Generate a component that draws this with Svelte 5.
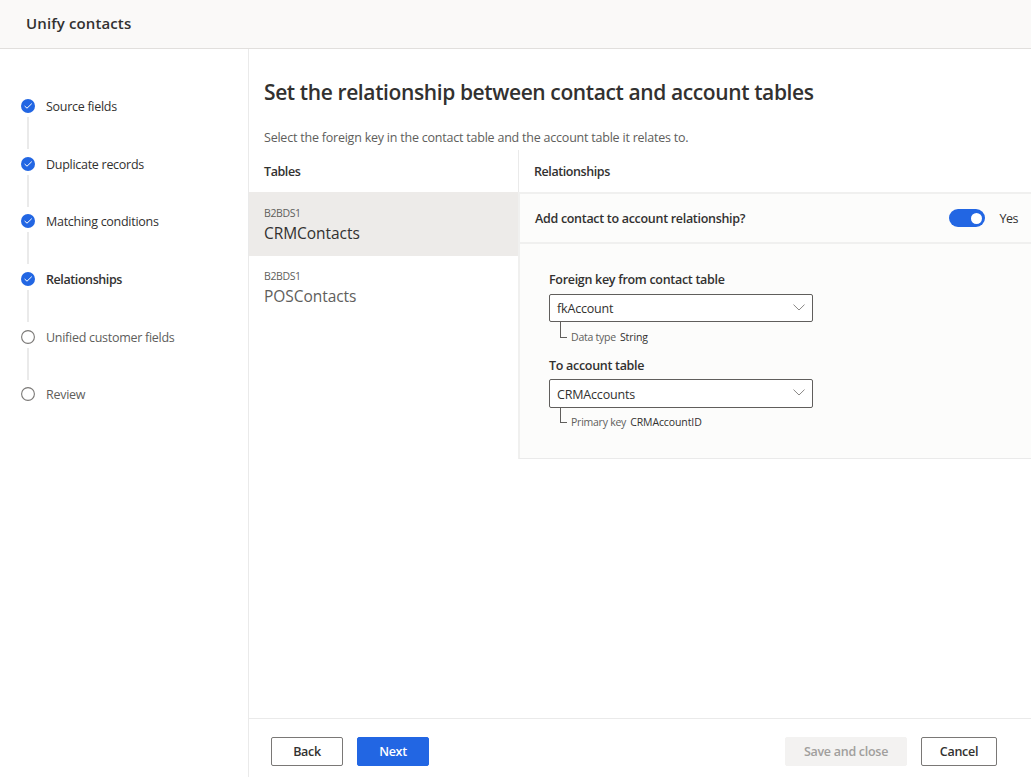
<script>
  const steps = [
    { label: 'Source fields', done: true },
    { label: 'Duplicate records', done: true },
    { label: 'Matching conditions', done: true },
    { label: 'Relationships', done: true, current: true },
    { label: 'Unified customer fields' },
    { label: 'Review' }
  ];
  const tables = [
    { source: 'B2BDS1', name: 'CRMContacts', selected: true },
    { source: 'B2BDS1', name: 'POSContacts' }
  ];
  const fields = [
    { label: 'Foreign key from contact table', value: 'fkAccount', hint: 'Data type', detail: 'String' },
    { label: 'To account table', value: 'CRMAccounts', hint: 'Primary key', detail: 'CRMAccountID' }
  ];
</script>

<div class="page">
  <header><h1>Unify contacts</h1></header>
  <div class="body">
    <nav>
      {#each steps as s, i}
        <div class="step" class:done={s.done} class:current={s.current}>
          <div class="rail">
            <svg class="dot" width="14" height="14" viewBox="0 0 14 14">
              {#if s.done}
                <circle cx="7" cy="7" r="7" fill="#2266e3" />
                <path d="M3.6 7 6 9.2 10.8 4.6" fill="none" stroke="#fff" stroke-width="1" />
              {:else}
                <circle cx="7" cy="7" r="6.4" fill="#fff" stroke="#7a7876" stroke-width="1.1" />
              {/if}
            </svg>
            {#if i < steps.length - 1}<div class="line"></div>{/if}
          </div>
          <span>{s.label}</span>
        </div>
      {/each}
    </nav>
    <main>
      <h2>Set the relationship between contact and account tables</h2>
      <div class="intro"><span>Select the foreign key in the contact table and the account table it relates to.</span></div>
      <div class="columns">
        <section class="tables">
          <div class="colhead"><span>Tables</span></div>
          {#each tables as t}
            <div class="table" class:selected={t.selected}>
              <div class="source"><span>{t.source}</span></div>
              <div class="name"><span>{t.name}</span></div>
            </div>
          {/each}
        </section>
        <section class="relations">
          <div class="colhead"><span>Relationships</span></div>
          <div class="ask">
            <span class="question">Add contact to account relationship?</span>
            <div class="toggle"><i></i></div>
            <span class="yes">Yes</span>
          </div>
          <div class="form">
            {#each fields as f}
              <div class="field">
                <div class="label"><span>{f.label}</span></div>
                <div class="select">
                  <span>{f.value}</span>
                  <svg width="12" height="7" viewBox="0 0 12 7"><path d="M.5.6 6 6 11.5.6" fill="none" stroke="#8a8886" /></svg>
                </div>
                <div class="detail"><div class="elbow"></div><span class="hint">{f.hint}</span><span>{f.detail}</span></div>
              </div>
            {/each}
          </div>
        </section>
      </div>
      <footer>
        <button class="back"><span>Back</span></button>
        <button class="next"><span>Next</span></button>
        <button class="save" disabled><span>Save and close</span></button>
        <button class="cancel"><span>Cancel</span></button>
      </footer>
    </main>
  </div>
</div>

<style>
  :global(body) { margin: 0; background: #fff; }
  * { box-sizing: border-box; }
  .page { width: 100%; height: 777px; display: flex; flex-direction: column; overflow: hidden; font-family: "Open Sans", "Noto Sans", sans-serif; font-size: 12.5px; letter-spacing: -0.22px; color: #323130; background: #fff; }
  span, h1, h2 { white-space: nowrap; }
  header { height: 49px; flex: none; background: #faf9f8; border-bottom: 1px solid #e1dfdd; padding: 11px 26px 0; }
  h1 { margin: 0; font-size: 15px; line-height: 24px; font-weight: 600; letter-spacing: 0.12px; }
  .body { flex: 1; display: flex; min-height: 0; }
  nav { width: 249px; flex: none; border-right: 1px solid #eaeaea; padding: 50px 0 0 21px; letter-spacing: -0.28px; }
  .step { display: flex; gap: 11px; height: 57.7px; color: #605e5c; }
  .step.done { color: #323130; }
  .step.current { font-weight: 600; letter-spacing: -0.41px; }
  .step span { line-height: 15px; }
  .rail { width: 14px; display: flex; flex-direction: column; align-items: center; }
  .dot { flex: none; display: block; }
  .line { width: 2px; height: 32px; margin-top: 4px; background: #eaeaea; }
  main { flex: 1; min-width: 0; display: flex; flex-direction: column; }
  h2 { margin: 28px 0 0 15px; font-size: 21px; line-height: 30px; font-weight: 600; letter-spacing: -0.39px; }
  .intro { margin: 21px 0 0 15px; line-height: 20px; height: 22px; color: #605e5c; }
  .columns { display: flex; height: 309px; flex: none; }
  .tables { width: 269px; flex: none; }
  .colhead { height: 42px; padding: 12px 15px 0; line-height: 20px; font-weight: 600; letter-spacing: -0.42px; }
  .relations .colhead { border-left: 1px solid #eaeaea; }
  .table { height: 63px; padding: 11px 15px 0; color: #605e5c; }
  .table.selected { height: 64px; background: #edebe9; padding-top: 12px; }
  .source { font-size: 10.5px; line-height: 18px; letter-spacing: -0.38px; }
  .name { font-size: 15.5px; line-height: 23px; letter-spacing: -0.05px; }
  .selected .name { color: #323130; }
  .relations { flex: 1; display: flex; flex-direction: column; }
  .ask { height: 52px; border: 2px solid #f0f0ef; border-right: 0; background: #fcfcfb; display: flex; align-items: center; padding: 0 12px 0 15px; }
  .question { font-weight: 600; letter-spacing: -0.3px; margin-right: auto; }
  .yes { letter-spacing: -0.5px; margin-right: 1px; }
  .toggle { width: 36px; height: 18px; border-radius: 9px; background: #2266e3; display: flex; justify-content: flex-end; align-items: center; padding-right: 3px; margin-right: 15px; }
  .toggle i { width: 11px; height: 11px; border-radius: 50%; background: #fff; }
  .form { flex: 1; background: #fcfcfb; border-bottom: 1px solid #eaeaea; border-left: 2px solid #f0f0ef; padding: 25px 0 0 29px; }
  .field { height: 85px; }
  .label { font-weight: 600; line-height: 22px; height: 25px; letter-spacing: -0.3px; }
  .select { width: 264px; height: 28px; border: 1px solid #605e5c; border-radius: 2px; background: #fff; display: flex; align-items: center; justify-content: space-between; padding: 0 7px; letter-spacing: -0.18px; }
  .select svg { margin-bottom: 1px; }
  .detail { display: flex; font-size: 10.5px; line-height: 30px; padding-left: 11px; gap: 4px; letter-spacing: -0.1px; }
  .elbow { width: 7px; height: 16px; border: 1px solid #605e5c; border-width: 0 0 1px 1px; }
  .hint { color: #605e5c; letter-spacing: -0.24px; }
  .field:last-child .label { line-height: 24px; }
  .field:last-child .select { height: 29px; }
  .field:last-child .select span { padding-top: 2px; }
  .field:last-child .select svg { margin-bottom: 3px; }
  .field:last-child .detail { line-height: 28px; }
  .field:last-child .elbow { height: 15px; }
  footer { margin-top: auto; height: 59px; flex: none; border-top: 1px solid #eaeaea; padding: 18px 34px 0 22px; display: flex; gap: 14px; }
  button { height: 29px; border: 1px solid #7a7876; border-radius: 2px; background: #fff; padding: 0; font: 600 12.5px "Open Sans", "Noto Sans", sans-serif; letter-spacing: -0.28px; color: #323130; }
  .back, .next { width: 72px; }
  .next { background: #2266e3; border-color: #2266e3; color: #fff; }
  .save { width: 122px; margin-left: auto; background: #f3f2f1; border-color: #f3f2f1; color: #a19f9d; }
  .cancel { width: 76px; }
</style>
